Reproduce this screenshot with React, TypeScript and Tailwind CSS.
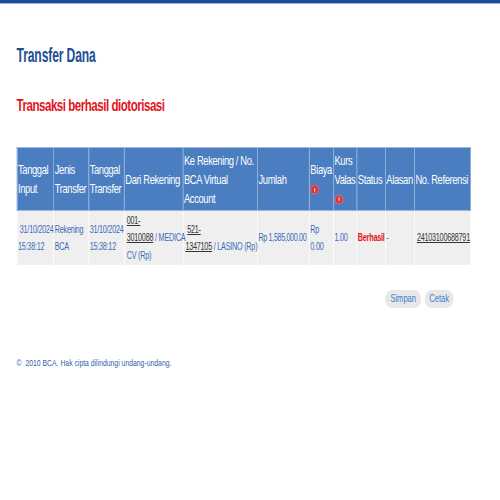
import React from "react";

const th =
  "border border-[#9db8df] bg-[#4a7ec0] text-white font-normal text-left align-middle px-[1px] leading-[19px] text-[13px] tracking-[-0.5px] whitespace-nowrap";
const td =
  "border border-white bg-[#efefef] text-[#3a6cb8] align-middle px-[1px] leading-[17.5px] text-[10px] tracking-[-0.3px] whitespace-nowrap";
const link = "underline text-[#333333]";

function Info() {
  return (
    <span className="inline-flex items-center justify-center w-[12px] h-[9px] rounded-full bg-[#d8343f] align-middle border border-[#e86a72]">
      <span className="w-[2px] h-[4px] bg-[#f7b3b8] rounded-[1px]" />
    </span>
  );
}

export default function App() {
  return (
    <div
      className="w-[500px] h-[500px] bg-white overflow-hidden"
      style={{ fontFamily: '"Liberation Sans", Arial, sans-serif' }}
    >
      <div className="h-[3px] bg-[#1b4f9c]" />
      <div className="h-[1px] bg-[#9bb3d8]" />
      <div className="w-[694px] origin-top-left [transform:scaleX(0.72)] pl-[23px]">
        <h1 className="mt-[39px] text-[21px] leading-[24px] font-bold text-[#1f4e96] tracking-[-0.2px]">
          <span className="inline-block origin-left [transform:scaleX(0.8)]">Transfer Dana</span>
        </h1>
        <h2 className="mt-[29px] text-[16px] leading-[20px] font-bold text-[#e3121b] tracking-[-0.65px]">
          Transaksi berhasil diotorisasi
        </h2>
        <table className="mt-[31px] border-collapse table-fixed w-[630px]">
          <colgroup>
            <col className="w-[51px]" />
            <col className="w-[48.5px]" />
            <col className="w-[49.5px]" />
            <col className="w-[81.5px]" />
            <col className="w-[103.5px]" />
            <col className="w-[72px]" />
            <col className="w-[33.5px]" />
            <col className="w-[32.5px]" />
            <col className="w-[39.5px]" />
            <col className="w-[40.5px]" />
            <col className="w-[78px]" />
          </colgroup>
          <thead>
            <tr className="h-[63px]">
              <th className={th}>Tanggal<br />Input</th>
              <th className={th}>Jenis<br />Transfer</th>
              <th className={th}>Tanggal<br />Transfer</th>
              <th className={th}>Dari Rekening</th>
              <th className={th + " leading-[19px]"}>Ke Rekening / No.<br />BCA Virtual<br />Account</th>
              <th className={th}>Jumlah</th>
              <th className={th}>Biaya<br /><Info /></th>
              <th className={th + " leading-[16px]"}>Kurs<br />Valas<br /><Info /></th>
              <th className={th}>Status</th>
              <th className={th}>Alasan</th>
              <th className={th}>No. Referensi</th>
            </tr>
          </thead>
          <tbody>
            <tr className="h-[55px]">
              <td className={td}>&nbsp;31/10/2024<br />15:38:12</td>
              <td className={td}>Rekening<br />BCA</td>
              <td className={td}>31/10/2024<br />15:38:12</td>
              <td className={td + " pl-[3px]"}>
                <span className={link}>001-</span>
                <br />
                <span className={link}>3010088</span> / MEDICA
                <br />
                CV (Rp)
              </td>
              <td className={td + " pl-[3px]"}>
                &nbsp;<span className={link}>521-</span>
                <br />
                <span className={link}>1347105</span> / LASINO (Rp)
              </td>
              <td className={td + " tracking-[-0.5px]"}>Rp 1,585,000.00</td>
              <td className={td}>Rp<br />0.00</td>
              <td className={td}>1.00</td>
              <td className={td}>
                <span className="font-bold text-[#e3121b]">Berhasil</span>
              </td>
              <td className={td}>-</td>
              <td className={td + " pl-[3px]"}>
                <span className={link}>24103100688791</span>
              </td>
            </tr>
          </tbody>
        </table>
        <div className="mt-[24px] w-[630px] flex justify-end gap-[5px] pr-[23px]">
          <button className="rounded-full bg-[#e8e8e8] text-[#3a7bd5] text-[10.5px] w-[50px] h-[18px]">
            Simpan
          </button>
          <button className="rounded-full bg-[#e8e8e8] text-[#3a7bd5] text-[10.5px] w-[40px] h-[18px]">
            Cetak
          </button>
        </div>
        <p className="mt-[49px] text-[9.5px] leading-[12px] text-[#2f5fa8]">
          ©&nbsp; 2010 BCA. Hak cipta dilindungi undang-undang.
        </p>
      </div>
    </div>
  );
}
